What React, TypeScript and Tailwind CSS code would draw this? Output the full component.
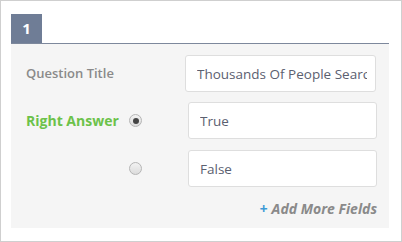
import React from "react";

const App: React.FC = () => {
  return (
    <div className="w-[402px] h-[242px] bg-white border border-[#cfcfcf] pt-[13px] pl-[10px] pr-[12px] font-['Open_Sans',sans-serif]">
      {/* Question number tab */}
      <div className="border-b border-[#7d889c]">
        <div className="w-[31px] h-[29px] bg-[#6f7d96] text-white font-bold text-[15px] flex items-center justify-center">
          1
        </div>
      </div>

      <div className="bg-[#f5f5f5] h-[184px] pt-[11px] pl-[15px] pr-[12px]">
        <div className="flex items-center">
          <label className="flex-1 text-[13px] font-semibold text-[#8a8a8a]">
            Question Title
          </label>
          <input
            readOnly
            value="Thousands Of People Searching"
            className="w-[191px] h-[37px] mr-[1px] bg-white border border-[#dedede] rounded-[3px] pl-[11px] pr-[8px] text-[13.5px] text-[#5b6070] outline-none"
          />
        </div>

        <div className="flex items-center mt-[10px]">
          <span className="w-[103px] text-[14px] font-bold text-[#6cc24a]">
            Right Answer
          </span>
          <span className="w-[13px] h-[13px] rounded-full border border-[#b5b5b5] bg-gradient-to-b from-[#f2f2f2] to-[#dcdcdc] flex items-center justify-center">
            <span className="w-[6px] h-[6px] rounded-full bg-[#444]" />
          </span>
          <input
            readOnly
            value="True"
            className="ml-auto w-[189px] h-[37px] bg-white border border-[#dedede] rounded-[3px] px-[11px] text-[13.5px] text-[#5b6070] outline-none"
          />
        </div>

        <div className="flex items-center mt-[11px]">
          <span className="w-[103px]" />
          <span className="w-[13px] h-[13px] rounded-full border border-[#b5b5b5] bg-gradient-to-b from-[#f2f2f2] to-[#dcdcdc]" />
          <input
            readOnly
            value="False"
            className="ml-auto w-[189px] h-[37px] bg-white border border-[#dedede] rounded-[3px] px-[11px] text-[13.5px] text-[#5b6070] outline-none"
          />
        </div>

        <div className="flex justify-end mt-[11px]">
          <a className="text-[14px] font-bold italic text-[#8a8a8a] cursor-pointer">
            <span className="text-[#3d9ad6] mr-[4px]">+</span>Add More Fields
          </a>
        </div>
      </div>
    </div>
  );
};

export default App;
